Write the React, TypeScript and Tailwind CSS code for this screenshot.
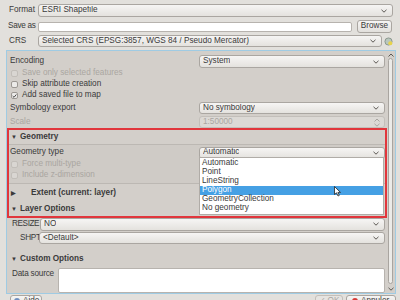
import React from "react";

function Chevron({ up }: { up?: boolean }) {
  return (
    <svg width="6" height="4" viewBox="0 0 6 4" className="shrink-0">
      <path d={up ? "M0.5 3.5 L3 1 L5.5 3.5" : "M0.5 0.8 L3 3.2 L5.5 0.8"} fill="none" stroke="#5b5853" strokeWidth="1" />
    </svg>
  );
}

function Combo({ text, className = "" }: { text: string; className?: string }) {
  return (
    <div
      className={
        "flex items-center border border-[#aaa6a1] rounded-[3px] bg-gradient-to-b from-[#f6f5f4] to-[#e4e2de] pl-[3px] pr-[5px] text-[#3a3a3a] " +
        className
      }
    >
      <span className="truncate">{text}</span>
      <span className="ml-auto">
        <Chevron />
      </span>
    </div>
  );
}

function Check({ label, checked, disabled }: { label: string; checked?: boolean; disabled?: boolean }) {
  return (
    <div className="flex items-center h-[11px] pl-[4px]">
      <div
        className={
          "w-[7px] h-[7px] rounded-[2px] border flex items-center justify-center " +
          (disabled ? "border-[#c2beb9] bg-[#d9d6d2]" : "border-[#9c9893] bg-[#ecebe9]")
        }
      >
        {checked && (
          <svg width="6" height="6" viewBox="0 0 6 6">
            <path d="M0.8 3 L2.4 4.6 L5.2 1.2" fill="none" stroke="#3a3a3a" strokeWidth="1.1" />
          </svg>
        )}
      </div>
      <span className={"ml-[4px] " + (disabled ? "text-[#aaa6a1]" : "text-[#3a3a3a]")}>{label}</span>
    </div>
  );
}

function Header({ label, open = true, indent = false }: { label: string; open?: boolean; indent?: boolean }) {
  return (
    <div className="flex items-center h-full pl-[4px] font-bold text-[#3a3a3a]">
      <span className="w-[9px] text-[6px] text-[#3a3a3a]">{open ? "▼" : "▶"}</span>
      {indent && <span className="w-[11px]" />}
      <span>{label}</span>
    </div>
  );
}

const items = ["Automatic", "Point", "LineString", "Polygon", "GeometryCollection", "No geometry"];

export default function App() {
  return (
    <div className="w-[400px] h-[300px] overflow-hidden relative bg-[#e2e0dc] text-[8.2px] leading-none whitespace-nowrap text-[#3a3a3a] font-['Liberation_Sans',Arial,sans-serif]">
      {/* top form */}
      <div className="flex items-center h-[13px] mt-[4px]">
        <span className="w-[38px] pl-[9px]">Format</span>
        <Combo text="ESRI Shapefile" className="flex-1 h-full mr-[7px]" />
      </div>
      <div className="flex items-center h-[13px] mt-[3px]">
        <span className="w-[38px] pl-[8px] tracking-[-0.3px]">Save as</span>
        <div className="flex-1 h-[10px] bg-white border border-[#b7b3ae] rounded-[2px]" />
        <div className="ml-[5px] mr-[8px] w-[35px] h-[13px] flex items-center justify-center border border-[#aaa6a1] rounded-[3px] bg-gradient-to-b from-[#f6f5f4] to-[#e2e0dc]">
          Browse
        </div>
      </div>
      <div className="flex items-center h-[12px] mt-[2px]">
        <span className="w-[38px] pl-[9px]">CRS</span>
        <Combo text="Selected CRS (EPSG:3857, WGS 84 / Pseudo Mercator)" className="flex-1 h-full" />
        <div className="ml-[2px] mr-[7px] w-[9px] h-[10px] flex items-center justify-center">
          <svg width="9" height="9" viewBox="0 0 9 9">
            <circle cx="4.5" cy="4.5" r="3.6" fill="#b9c7bd" stroke="#7e8a82" strokeWidth="0.8" />
            <circle cx="6.3" cy="6.3" r="2" fill="#e8d34a" />
          </svg>
        </div>
      </div>

      {/* scroll area */}
      <div className="relative mt-[3px] ml-[6px] mr-[4px] h-[244px] border border-[#9fcbe3] bg-[#d3cfca] flex">
        <div className="flex-1 flex flex-col pr-[2px]">
          <div className="flex items-center h-[13px] mt-[4px]">
            <span className="w-[192px] pl-[3px]">Encoding</span>
            <Combo text="System" className="flex-1 h-full" />
          </div>
          <div>
            <Check label="Save only selected features" disabled />
            <Check label="Skip attribute creation" />
            <Check label="Add saved file to map" checked />
          </div>
          <div className="flex items-center h-[14px]">
            <span className="w-[192px] pl-[3px]">Symbology export</span>
            <Combo text="No symbology" className="flex-1 h-[12px]" />
          </div>
          <div className="flex items-center h-[14px]">
            <span className="w-[192px] pl-[3px] text-[#aaa6a1]">Scale</span>
            <div className="flex-1 h-[12px] flex items-center border border-[#c3bfba] rounded-[3px] bg-[#dcd9d5] pl-[3px] pr-[4px] text-[#aaa6a1]">
              <span>1:50000</span>
              <span className="ml-auto flex flex-col gap-[1px] opacity-40">
                <Chevron up />
                <Chevron />
              </span>
            </div>
          </div>

          {/* geometry group */}
          <div className="h-[14px] mt-[1px]">
            <Header label="Geometry" />
          </div>
          <div className="h-[40px] border-y border-[#bcb8b3] bg-[#cfcbc6]">
            <div className="flex items-center h-[13px] mt-[1px]">
              <span className="w-[192px] pl-[3px]">Geometry type</span>
              <Combo text="Automatic" className="flex-1 h-[12px]" />
            </div>
            <Check label="Force multi-type" disabled />
            <Check label="Include z-dimension" disabled />
          </div>
          <div className="h-[18px]">
            <Header label="Extent (current: layer)" open={false} indent />
          </div>
          <div className="h-[14px]">
            <Header label="Layer Options" />
          </div>
          <div className="flex items-center h-[14px] mt-[1px]">
            <span className="w-[33px] pl-[5px] tracking-[-0.4px]">RESIZE</span>
            <Combo text="NO" className="flex-1 h-[13px]" />
          </div>
          <div className="flex items-center h-[14px]">
            <span className="w-[32px] pl-[13px] tracking-[-0.3px]">SHPT</span>
            <Combo text="<Default>" className="flex-1 h-[12px]" />
          </div>
          <div className="h-[14px] mt-[7px]">
            <Header label="Custom Options" />
          </div>
          <div className="flex h-[25px] mt-[2px]">
            <span className="w-[51px] pl-[5px] pt-[2px] tracking-[-0.2px]">Data source</span>
            <div className="flex-1 h-full bg-white border border-[#b7b3ae] rounded-[2px]" />
          </div>
        </div>
        {/* scrollbar */}
        <div className="w-[8px] flex flex-col items-center pr-[1px]">
          <div className="h-[6px] mt-[1px] flex items-center">
            <Chevron up />
          </div>
          <div className="w-[5px] h-[226px] border border-[#a9a5a0] rounded-[3px] bg-[#ecebe8]" />
          <div className="h-[6px] mt-[2px] flex items-center">
            <Chevron />
          </div>
        </div>

        {/* red highlight annotation */}
        <div className="absolute left-[0px] top-[77px] w-[380px] h-[90px] border-2 border-[#e1363c] pointer-events-none" />

        {/* open dropdown list */}
        <div className="absolute left-[192px] top-[106px] w-[185px] h-[58px] bg-white border border-[#b0aca7] pt-[1px]">
          {items.map((it) => (
            <div
              key={it}
              className={"h-[9px] flex items-center pl-[2px] " + (it === "Polygon" ? "bg-[#45a0e4] text-white" : "text-[#3a3a3a]")}
            >
              {it}
            </div>
          ))}
          <svg className="absolute left-[134px] top-[28px]" width="7" height="11" viewBox="0 0 7 11">
            <path d="M0.5 0.5 L0.5 8.5 L2.5 6.8 L4 10 L5.3 9.4 L3.9 6.4 L6.5 6.4 Z" fill="#fff" stroke="#222" strokeWidth="0.8" />
          </svg>
        </div>
      </div>

      {/* bottom buttons */}
      <div className="flex mt-[1px] px-[10px]">
        <div className="w-[32px] h-[12px] flex items-center pl-[3px] gap-[3px] border border-[#aaa6a1] rounded-[3px] bg-gradient-to-b from-[#f6f5f4] to-[#e2e0dc]">
          <span className="w-[6px] h-[6px] rounded-full bg-[#6f8fbf]" />
          <span>Aide</span>
        </div>
        <div className="ml-auto w-[28px] h-[12px] flex items-center justify-center gap-[2px] border border-[#c3bfba] rounded-[3px] bg-[#e6e4e1] text-[#aaa6a1]">
          <span>✓</span>
          <span>OK</span>
        </div>
        <div className="ml-[3px] mr-[-6px] w-[50px] h-[12px] flex items-center pl-[5px] gap-[3px] border border-[#aaa6a1] rounded-[3px] bg-gradient-to-b from-[#f6f5f4] to-[#e2e0dc]">
          <span className="w-[6px] h-[6px] rounded-full bg-[#d63a36]" />
          <span>Annuler</span>
        </div>
      </div>
    </div>
  );
}
